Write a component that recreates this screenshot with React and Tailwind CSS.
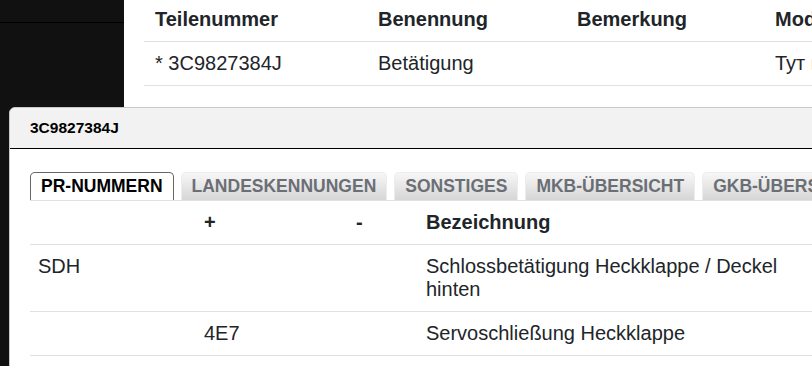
export default function App() {
  const topCols = "grid grid-cols-[223px_199px_198px_200px]";
  const mCols = "grid grid-cols-[166px_152px_70px_380px]";
  return (
    <div
      className="relative w-[812px] h-[366px] overflow-hidden bg-white text-[#212529]"
      style={{ fontFamily: '"Liberation Sans", Arial, sans-serif' }}
    >
      <div className="flex h-full">
        <div className="w-[124px] shrink-0 bg-[#111111] flex flex-col">
          <div className="h-[23px] border-b border-black" />
        </div>
        <div className="flex-1 pl-[20px]">
          <div className="w-[820px] text-[20px] leading-[23px]">
            <div className={`${topCols} border-b border-[#dee2e6] font-bold`}>
              <div className="px-[11px] pt-[8px] pb-[10px]">Teilenummer</div>
              <div className="px-[11px] pt-[8px] pb-[10px]">Benennung</div>
              <div className="px-[11px] pt-[8px] pb-[10px]">Bemerkung</div>
              <div className="px-[11px] pt-[8px] pb-[10px]">Modell</div>
            </div>
            <div className={`${topCols} border-b border-[#dee2e6]`}>
              <div className="px-[11px] py-[10px]">* 3C9827384J</div>
              <div className="px-[11px] py-[10px]">Betätigung</div>
              <div className="px-[11px] py-[10px]"></div>
              <div className="px-[11px] py-[10px]">Тут пусто</div>
            </div>
          </div>
        </div>
      </div>

      <div className="absolute left-[9px] top-[107px] w-[900px] h-[300px] bg-white border border-[#c8c8c8] rounded-tl-[6px] overflow-hidden">
        <div className="h-[41px] bg-[#f2f2f2] border-b border-black px-[20px] flex items-center">
          <span className="text-[15.5px] font-bold text-black">3C9827384J</span>
        </div>
        <div className="pl-[20px] pt-[23px]">
          <div className="flex items-end gap-[7px] text-[17.5px] leading-[19px] font-bold">
            <div className="px-[10px] py-[4px] border border-b-0 border-[#666666] rounded-t-[5px] bg-white text-black">
              PR-NUMMERN
            </div>
            {["LANDESKENNUNGEN", "SONSTIGES", "MKB-ÜBERSICHT", "GKB-ÜBERSICHT"].map((t) => (
              <div
                key={t}
                className="px-[10px] py-[4px] border border-b-0 border-[#ececec] rounded-t-[5px] bg-gradient-to-b from-[#f7f7f7] to-[#d6d6d6] text-[#6b6f75] whitespace-nowrap"
              >
                {t}
              </div>
            ))}
          </div>
          <div className="w-[860px] border-t border-[#dee2e6] text-[20px] leading-[23px]">
            <div className={`${mCols} border-b border-[#dee2e6] font-bold`}>
              <div className="px-[8px] py-[10px]"></div>
              <div className="px-[8px] py-[10px]">+</div>
              <div className="px-[8px] py-[10px]">-</div>
              <div className="px-[8px] py-[10px]">Bezeichnung</div>
            </div>
            <div className={`${mCols} border-b border-[#dee2e6]`}>
              <div className="px-[8px] py-[10px]">SDH</div>
              <div className="px-[8px] py-[10px]"></div>
              <div className="px-[8px] py-[10px]"></div>
              <div className="px-[8px] py-[10px]">Schlossbetätigung Heckklappe / Deckel hinten</div>
            </div>
            <div className={`${mCols} border-b border-[#dee2e6]`}>
              <div className="px-[8px] py-[10px]"></div>
              <div className="px-[8px] py-[10px]">4E7</div>
              <div className="px-[8px] py-[10px]"></div>
              <div className="px-[8px] py-[10px]">Servoschließung Heckklappe</div>
            </div>
          </div>
        </div>
      </div>
    </div>
  );
}
